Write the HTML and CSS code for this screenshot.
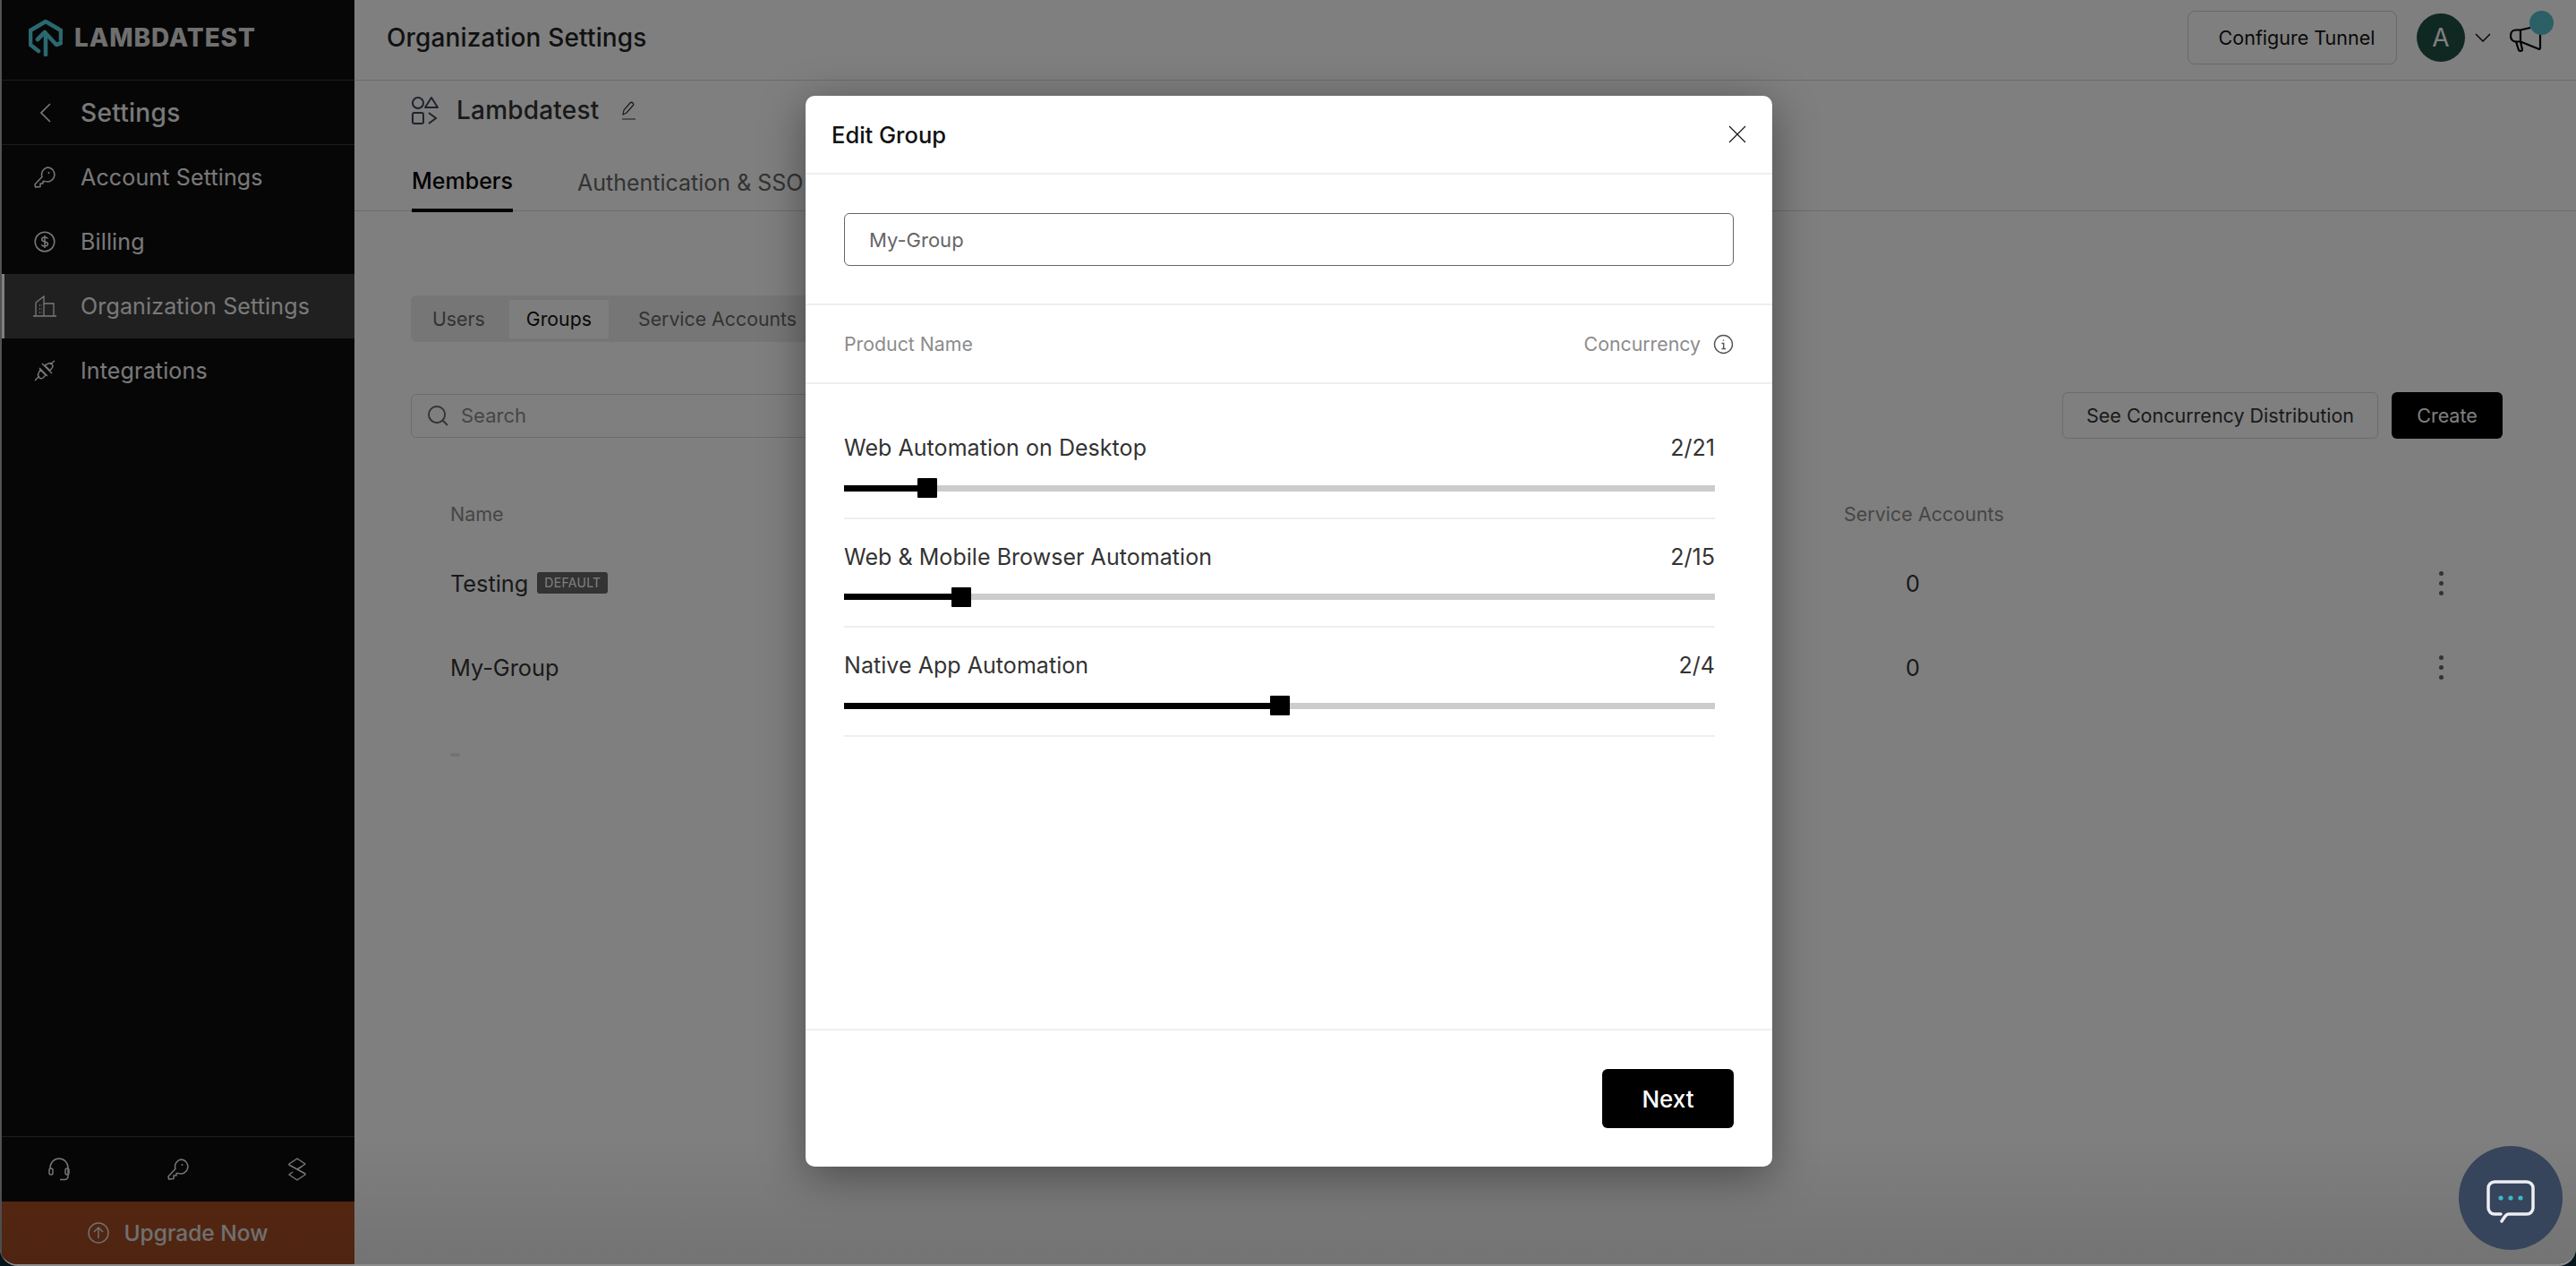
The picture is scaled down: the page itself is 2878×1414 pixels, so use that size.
FILE: index.html
```html
<!DOCTYPE html>
<html lang="en">
<head>
    <meta charset="UTF-8">
    <title>Organization Settings</title>
    <link rel="stylesheet" href="styles.css">
</head>
<body>

<div class="app">
    <aside class="sidebar">
        <div class="logo">
            <svg class="logo-icon" viewBox="0 0 38 41" fill="none" stroke="#56d0de" stroke-width="4.600" stroke-linejoin="round" stroke-linecap="round">
                <path d="M11 35 2 28V12L19 2l17 10v10"/>
                <path d="M19 39V19"/>
                <path d="M10 22l8-8 13 14 5-2"/>
            </svg>
            <span class="logo-text">LAMBDATEST</span>
        </div>
        <div class="back-row">
            <svg class="back-icon" viewBox="0 0 12 22" fill="none" stroke="currentColor" stroke-width="1.600"><path d="M11 1 1 11l10 10"/></svg>
            <span>Settings</span>
        </div>
        <nav class="nav">
            <a class="nav-item" href="#">
                <svg class="nav-icon" viewBox="0 0 24 24" fill="none" stroke="currentColor" stroke-width="1.500" stroke-linejoin="round">
                    <path d="M15 1a8 8 0 1 1-2.600 15.600L10 16.400V19H7v3.400L1.600 23 1 20l8-8.600A8 8 0 0 1 15 1z"/>
                    <circle cx="16.500" cy="7" r="1" fill="currentColor" stroke="none"/>
                </svg>
                <span>Account Settings</span>
            </a>
            <a class="nav-item" href="#">
                <svg class="nav-icon" viewBox="0 0 24 24" fill="none" stroke="currentColor" stroke-width="1.500">
                    <circle cx="12" cy="12" r="10.800"/>
                    <path d="M15.500 8.500C15 7.500 14 7 12 7c-2 0-3.300.9-3.300 2.400 0 3.400 6.800 1.700 6.800 5.200 0 1.500-1.500 2.400-3.500 2.400s-3.200-.7-3.700-1.800M12 5v14"/>
                </svg>
                <span>Billing</span>
            </a>
            <a class="nav-item nav-item-active" href="#">
                <svg class="nav-icon nav-icon-wide" viewBox="0 0 28 24" fill="none" stroke="currentColor" stroke-width="1.300">
                    <path d="M1 23h26M4 23V8l9-7v22M13 9h11v14M8 11h1M8 15h1M8 19h1M11 11h-.5M11 15h-.5M11 19h-.5"/>
                </svg>
                <span>Organization Settings</span>
            </a>
            <a class="nav-item" href="#">
                <svg class="nav-icon" viewBox="0 0 24 24" fill="none" stroke="currentColor" stroke-width="1.400">
                    <path d="M1 23l5-5M23 1l-5 4M7 11l6 6-3 3c-1.500 1-3 1-4.200-.3S4 16.500 5 15zM12 6l6 6 2.500-3.500c.8-1.500.6-2.800-.6-4s-2.700-1.300-4-.4zM6 9l9 9M9 4l11 11"/>
                </svg>
                <span>Integrations</span>
            </a>
        </nav>
        <div class="side-tools">
            <svg class="tool-icon" viewBox="0 0 24 26" fill="none" stroke="currentColor" stroke-width="1.500">
                <path d="M2 13V11a10 10 0 0 1 20 0v10a3.500 3.500 0 0 1-3.500 3.500H13"/>
                <rect x="1" y="12" width="4" height="7" rx="2"/>
                <rect x="19" y="12" width="4" height="7" rx="2"/>
            </svg>
            <svg class="tool-icon" viewBox="0 0 24 24" fill="none" stroke="currentColor" stroke-width="1.500" stroke-linejoin="round">
                <path d="M15 1a8 8 0 1 1-2.600 15.600L10 16.400V19H7v3.400L1.600 23 1 20l8-8.600A8 8 0 0 1 15 1z"/>
                <circle cx="16.500" cy="7" r="1" fill="currentColor" stroke="none"/>
            </svg>
            <svg class="tool-icon" viewBox="0 0 22 26" fill="none" stroke="currentColor" stroke-width="1.500" stroke-linejoin="round">
                <path d="M11 1l9 6-4 3-5 3-9-5V7zM11 13l9 5v1l-9 6-9-6 4-3"/>
            </svg>
        </div>
        <div class="upgrade">
            <svg class="upgrade-icon" viewBox="0 0 24 24" fill="none" stroke="currentColor" stroke-width="1.500">
                <circle cx="12" cy="12" r="11"/>
                <path d="M12 18V6M7 11l5-5 5 5"/>
            </svg>
            <span>Upgrade Now</span>
        </div>
    </aside>

    <main class="main">
        <header class="topbar">
            <h1 class="page-title">Organization Settings</h1>
            <div class="topbar-right">
                <button class="btn-tunnel">Configure Tunnel</button>
                <div class="avatar">A</div>
                <svg class="chevron" viewBox="0 0 18 10" fill="none" stroke="currentColor" stroke-width="1.500"><path d="M1 1l8 8 8-8"/></svg>
                <div class="announce">
                    <svg class="announce-icon" viewBox="0 0 38 28" fill="none" stroke="#000" stroke-width="2.200" stroke-linejoin="round">
                        <path d="M23 1 12 3.500H7C3 3.500 1 6.500 1 10s2 6.500 6 6.500h5L33 25l1-1V7"/>
                        <path d="M12 3.500v13M7 16.500l3 9.500c1 1.500 4 1 4-.500l-2-9"/>
                    </svg>
                    <span class="announce-dot"></span>
                </div>
            </div>
        </header>

        <div class="org-row">
            <svg class="org-icon" viewBox="0 0 30 31" fill="none" stroke="#3c4658" stroke-width="2">
                <circle cx="7" cy="7" r="6"/>
                <path d="M22 1l7 11H15z" stroke-linejoin="round"/>
                <rect x="1" y="18" width="12" height="12" rx="2"/>
                <path d="M19 18l8 6-8 6"/>
            </svg>
            <span class="org-name">Lambdatest</span>
            <svg class="pencil" viewBox="0 0 16 21" fill="none" stroke="#333" stroke-width="1.200"><path d="M1 20h15M2 15l1-5 7-8c1-1 2-1 3 0s1 2 0 3l-7 8z"/></svg>
        </div>

        <div class="tabs">
            <a class="tab tab-active" href="#">Members</a>
            <a class="tab" href="#">Authentication &amp; SSO</a>
        </div>

        <div class="content">
            <div class="segments">
                <span class="segment">Users</span>
                <span class="segment segment-active">Groups</span>
                <span class="segment">Service Accounts</span>
            </div>

            <div class="toolbar">
                <div class="search">
                    <svg class="search-icon" viewBox="0 0 24 24" fill="none" stroke="currentColor" stroke-width="2"><circle cx="10.500" cy="10.500" r="9.500"/><path d="M17.500 17.500 23 23"/></svg>
                    <span>Search</span>
                </div>
                <button class="btn-outline">See Concurrency Distribution</button>
                <button class="btn-dark">Create</button>
            </div>

            <div class="group-table">
                <div class="group-row group-head">
                    <span>Name</span>
                    <span>Service Accounts</span>
                    <span></span>
                </div>
                <div class="group-row">
                    <span class="group-name">Testing <em class="badge">DEFAULT</em></span>
                    <span class="group-count">0</span>
                    <span class="kebab"><i></i><i></i><i></i></span>
                </div>
                <div class="group-row">
                    <span class="group-name">My-Group</span>
                    <span class="group-count">0</span>
                    <span class="kebab"><i></i><i></i><i></i></span>
                </div>
                <div class="skeleton-dash"></div>
            </div>
        </div>
    </main>

    <div class="overlay"></div>

    <section class="modal">
        <div class="modal-head">
            <h2>Edit Group</h2>
            <svg class="modal-close" viewBox="0 0 20 20" fill="none" stroke="#111" stroke-width="1.100"><path d="M1 1l18 18M19 1 1 19"/></svg>
        </div>
        <div class="modal-name">
            <input class="name-input" type="text" value="My-Group">
        </div>
        <div class="product-head">
            <span>Product Name</span>
            <span class="product-head-right">Concurrency
                <svg class="info-icon" viewBox="0 0 23 23" fill="none" stroke="#555" stroke-width="1.400">
                    <circle cx="11.500" cy="11.500" r="10"/>
                    <path d="M9.500 10.500h2.200v6M9.500 16.500h4.500M11.500 6.500v1.200"/>
                </svg>
            </span>
        </div>
        <div class="products">
            <div class="product">
                <div class="product-label"><span>Web Automation on Desktop</span><span>2/21</span></div>
                <div class="slider">
                    <span class="slider-fill" style="width: 82px"></span>
                    <span class="slider-thumb"></span>
                    <span class="slider-rest"></span>
                </div>
            </div>
            <div class="product">
                <div class="product-label"><span>Web &amp; Mobile Browser Automation</span><span>2/15</span></div>
                <div class="slider">
                    <span class="slider-fill" style="width: 120px"></span>
                    <span class="slider-thumb"></span>
                    <span class="slider-rest"></span>
                </div>
            </div>
            <div class="product">
                <div class="product-label"><span>Native App Automation</span><span>2/4</span></div>
                <div class="slider">
                    <span class="slider-fill" style="width: 476px"></span>
                    <span class="slider-thumb"></span>
                    <span class="slider-rest"></span>
                </div>
            </div>
        </div>
        <div class="modal-foot">
            <button class="btn-next">Next</button>
        </div>
    </section>

    <button class="chat-bubble" aria-label="Chat">
        <svg class="chat-icon" viewBox="0 0 54 48" fill="none" stroke-linecap="round">
            <path d="M16 38H9a7 7 0 0 1-7-7V9a7 7 0 0 1 7-7h36a7 7 0 0 1 7 7v22a7 7 0 0 1-7 7H25c-3 0-4 2-8 8" stroke="#eceef2" stroke-width="3.500"/>
            <circle cx="16" cy="20" r="2.600" fill="#3fb6c6"/>
            <circle cx="27" cy="20" r="2.600" fill="#3fb6c6"/>
            <circle cx="38" cy="20" r="2.600" fill="#3fb6c6"/>
        </svg>
    </button>
</div>

</body>
</html>
```

FILE: styles.css
```css
* {
    box-sizing: border-box;
}

html, body {
    height: 100%;
}

body {
    margin: 0;
    background-color: #06141c;
    font-family: Inter, "Liberation Sans", sans-serif;
    color: #1a1a1a;
    overflow: hidden;
}

button {
    font-family: inherit;
    cursor: pointer;
}

a {
    color: inherit;
    text-decoration: none;
}

.app {
    position: relative;
    display: flex;
    width: 2878px;
    height: 1414px;
    overflow: hidden;
    background-color: #ffffff;
    border-bottom: 2px solid #8c8c8c;
    border-radius: 0 0 20px 20px;
}

/* sidebar */
.sidebar {
    flex: 0 0 396px;
    display: flex;
    flex-direction: column;
    background-color: #0c0c0c;
    border-left: 2px solid #a6a6a6;
    color: #f2f2f2;
}

.logo {
    display: flex;
    align-items: center;
    gap: 13px;
    height: 90px;
    padding: 0 0 5px 30px;
    border-bottom: 1px solid #3a3a3a;
}

.logo-icon {
    width: 38px;
    height: 41px;
}

.logo-text {
    font-size: 28px;
    font-weight: 800;
    letter-spacing: 0.9px;
    color: #dedede;
}

.back-row {
    display: flex;
    align-items: center;
    height: 72px;
    padding-left: 88px;
    font-size: 28px;
    font-weight: 500;
    letter-spacing: 0.3px;
    border-bottom: 1px solid #3a3a3a;
}

.back-icon {
    width: 12px;
    height: 22px;
    margin-left: -45px;
    margin-right: 33px;
}

.nav {
    flex: 1;
}

.nav-item {
    display: flex;
    align-items: center;
    gap: 28px;
    height: 72px;
    padding-left: 36px;
    font-size: 25px;
    letter-spacing: 0.15px;
}

.nav-item-active {
    background-color: #404040;
    border-left: 3px solid #ffffff;
    padding-left: 33px;
}

.nav-icon {
    width: 24px;
    height: 24px;
}

.nav-icon-wide {
    width: 28px;
    margin-left: -2px;
    margin-right: -2px;
}

.side-tools {
    display: flex;
    align-items: center;
    justify-content: space-between;
    height: 73px;
    padding: 0 52px;
    border-top: 1px solid #3a3a3a;
}

.tool-icon {
    width: 24px;
    height: 26px;
}

.upgrade {
    display: flex;
    align-items: center;
    justify-content: center;
    gap: 16px;
    height: 70px;
    background-color: #ae5024;
    font-size: 24.500px;
    font-weight: 500;
}

.upgrade-icon {
    width: 24px;
    height: 24px;
}

/* main area */
.main {
    flex: 1;
    min-width: 0;
}

.topbar {
    display: flex;
    align-items: center;
    justify-content: space-between;
    height: 90px;
    padding: 0 36px 5px 36px;
    border-bottom: 1px solid #d8d8d8;
}

.page-title {
    margin: 0;
    font-size: 28px;
    font-weight: 500;
    letter-spacing: 0.15px;
    color: #222222;
}

.topbar-right {
    display: flex;
    align-items: center;
}

.btn-tunnel {
    width: 234px;
    height: 60px;
    padding: 0 0 0 10px;
    background: none;
    border: 1px solid #d0d0d0;
    border-radius: 8px;
    font-size: 21.500px;
    color: #111111;
}

.avatar {
    display: flex;
    align-items: center;
    justify-content: center;
    width: 54px;
    height: 54px;
    margin-left: 22px;
    background-color: #1e5042;
    border-radius: 50%;
    color: #ffffff;
    font-size: 28px;
}

.chevron {
    width: 18px;
    height: 10px;
    margin-left: 11px;
    color: #111111;
}

.announce {
    position: relative;
    width: 38px;
    height: 28px;
    margin-top: 4px;
    margin-left: 21px;
}

.announce-icon {
    display: block;
    width: 38px;
    height: 28px;
}

.announce-dot {
    position: absolute;
    left: 22px;
    top: -18px;
    width: 27px;
    height: 27px;
    background-color: #57bfcc;
    border-radius: 50%;
}

.org-row {
    display: flex;
    align-items: center;
    height: 66px;
    padding-left: 64px;
}

.org-icon {
    width: 30px;
    height: 31px;
}

.org-name {
    margin-left: 20px;
    font-size: 28px;
    font-weight: 500;
    letter-spacing: 0.2px;
    color: #333333;
}

.pencil {
    width: 16px;
    height: 21px;
    margin-left: 25px;
}

.tabs {
    display: flex;
    gap: 72px;
    height: 80px;
    padding-left: 64px;
    border-bottom: 1px solid #d8d8d8;
}

.tab {
    display: flex;
    align-items: center;
    height: 81px;
    padding-top: 14px;
    font-size: 25px;
    color: #666666;
}

.tab-active {
    border-bottom: 4px solid #000000;
    color: #000000;
    font-weight: 500;
}

.content {
    padding: 94px 82px 0 63px;
}

.segments {
    display: inline-flex;
    align-items: center;
    height: 52px;
    padding: 0 24px;
    background-color: #ededed;
    border-radius: 6px;
    font-size: 21.300px;
    color: #666666;
}

.segment-active {
    display: flex;
    align-items: center;
    height: 43px;
    margin: 0 33px 0 27px;
    padding: 0 19px;
    background-color: #fcfcfc;
    color: #111111;
}

.toolbar {
    display: flex;
    align-items: center;
    gap: 15px;
    height: 52px;
    margin-top: 56px;
}

.search {
    display: flex;
    align-items: center;
    gap: 14px;
    width: 900px;
    height: 49px;
    margin-right: auto;
    padding-left: 18px;
    border: 1px solid #d8d8d8;
    border-radius: 6px;
    font-size: 22px;
    color: #8c8c8c;
}

.search-icon {
    width: 23px;
    height: 23px;
    color: #666666;
}

.btn-outline {
    width: 353px;
    height: 52px;
    background: none;
    border: 1px solid #d8d8d8;
    border-radius: 6px;
    font-size: 21.500px;
    color: #333333;
}

.btn-dark {
    width: 124px;
    height: 52px;
    background-color: #000000;
    border: none;
    border-radius: 6px;
    font-size: 21.500px;
    color: #ffffff;
}

.group-table {
    margin-top: 58px;
    padding: 0 57px 0 44px;
}

.group-row {
    display: grid;
    grid-template-columns: 1557px 1fr 24px;
    align-items: center;
    height: 94px;
}

.group-head {
    height: 52px;
    margin-bottom: 4px;
    font-size: 21.500px;
    color: #8c8c8c;
}

.group-name {
    display: flex;
    align-items: center;
    gap: 10px;
    font-size: 25.300px;
    color: #333333;
}

.badge {
    display: inline-block;
    height: 24px;
    padding: 0 8px;
    line-height: 24px;
    background-color: #666666;
    border-radius: 3px;
    font-size: 14px;
    font-style: normal;
    letter-spacing: 0.3px;
    color: #ffffff;
}

.group-count {
    padding-left: 69px;
    font-size: 25.300px;
    color: #333333;
}

.kebab {
    display: flex;
    flex-direction: column;
    align-items: center;
    gap: 6px;
}

.kebab i {
    width: 5px;
    height: 5px;
    background-color: #666666;
    border-radius: 50%;
}

.skeleton-dash {
    width: 11px;
    height: 4px;
    margin-top: 49px;
    background-color: #e6e6e6;
    border-radius: 2px;
}

/* dimmed layer, modal and chat float over the page */
.overlay {
    position: absolute;
    inset: 0;
    background: linear-gradient(to bottom, rgba(0, 0, 0, 0.5) 90%, rgba(0, 0, 0, 0.55));
}

.modal {
    position: absolute;
    left: 900px;
    top: 107px;
    display: flex;
    flex-direction: column;
    width: 1080px;
    height: 1196px;
    background-color: #ffffff;
    border-radius: 10px;
    box-shadow: 0 10px 50px rgba(0, 0, 0, 0.4);
}

.modal-head {
    display: flex;
    align-items: center;
    justify-content: space-between;
    height: 88px;
    padding: 0 29px;
    border-bottom: 2px solid #eeeeee;
}

.modal-head h2 {
    margin: 0;
    font-size: 25.500px;
    font-weight: 500;
    color: #111111;
}

.modal-close {
    width: 20px;
    height: 20px;
}

.modal-name {
    height: 146px;
    padding: 43px 43px 0;
    border-bottom: 2px solid #eeeeee;
}

.name-input {
    display: block;
    width: 100%;
    height: 59px;
    padding: 0 27px;
    border: 1px solid #666666;
    border-radius: 6px;
    outline: none;
    font-family: inherit;
    font-size: 22px;
    color: #666666;
}

.product-head {
    display: flex;
    align-items: center;
    justify-content: space-between;
    height: 88px;
    padding: 0 43px;
    border-bottom: 2px solid #eeeeee;
    font-size: 21.300px;
    color: #8c8c8c;
}

.product-head-right {
    display: flex;
    align-items: center;
    gap: 14px;
}

.info-icon {
    width: 23px;
    height: 23px;
}

.products {
    flex: 1;
    padding: 29px 64px 0 43px;
}

.product {
    height: 121.500px;
    padding-top: 26px;
    border-bottom: 2px solid #eeeeee;
}

.product-label {
    display: flex;
    justify-content: space-between;
    font-size: 25px;
    line-height: 32px;
    letter-spacing: 0.05px;
    color: #333333;
}

.slider {
    display: flex;
    align-items: center;
    height: 22px;
    margin-top: 18px;
}

.slider-fill {
    height: 7px;
    background-color: #000000;
}

.slider-thumb {
    flex: 0 0 22px;
    height: 22px;
    background-color: #000000;
    border-radius: 1px;
}

.slider-rest {
    flex: 1;
    height: 7px;
    background-color: #cccccc;
}

.modal-foot {
    display: flex;
    justify-content: flex-end;
    height: 154px;
    padding: 43px 43px 0;
    border-top: 2px solid #eeeeee;
}

.btn-next {
    width: 147px;
    height: 66px;
    background-color: #000000;
    border: none;
    border-radius: 6px;
    font-size: 26px;
    font-weight: 500;
    color: #ffffff;
}

.chat-bubble {
    position: absolute;
    left: 2747px;
    top: 1280px;
    display: flex;
    align-items: center;
    justify-content: center;
    width: 116px;
    height: 116px;
    padding: 0;
    background-color: #36445c;
    border: none;
    border-radius: 50%;
}

.chat-icon {
    width: 54px;
    height: 48px;
    margin-top: 8px;
}
```
